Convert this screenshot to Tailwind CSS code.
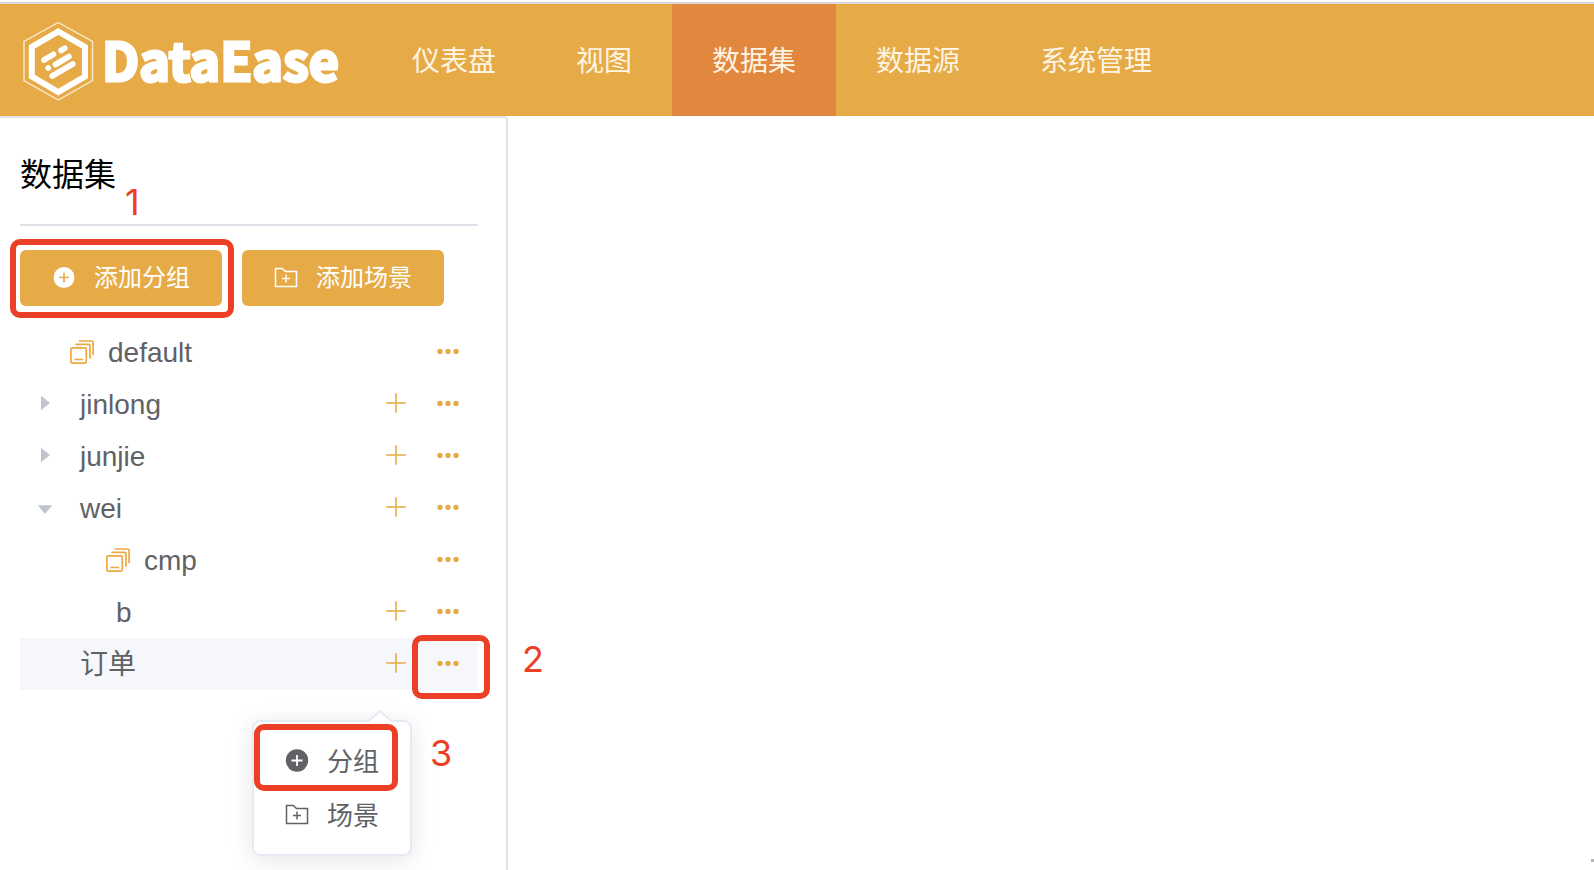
<!DOCTYPE html>
<html lang="zh-CN">
<head>
<meta charset="utf-8">
<meta name="viewport" content="width=device-width, initial-scale=1">
<title>DataEase</title>
<script src="https://cdn.jsdelivr.net/npm/@tailwindcss/browser@4"></script>
</head>
<body class="bg-white font-['Liberation_Sans','Noto_Sans_CJK_SC',sans-serif] text-[#606266]">
<svg class="hidden" aria-hidden="true">
  <symbol id="plus" viewBox="0 0 24 24"><path d="M12 2.200V21.800M2.200 12H21.800" fill="none" stroke="#e6ab46" stroke-width="1.600"/></symbol>
  <symbol id="dots" viewBox="0 0 24 24"><g fill="#e6ab46"><circle cx="4" cy="12.400" r="2.700"/><circle cx="12" cy="12.400" r="2.700"/><circle cx="20" cy="12.400" r="2.700"/></g></symbol>
  <symbol id="stack" viewBox="0 0 24 24"><g fill="none" stroke="#efa840" stroke-width="1.700" stroke-linecap="round" stroke-linejoin="round"><rect x=".9" y="7.800" width="15.400" height="15.300" rx="1.500"/><path d="M5 19.500H12.500M6 4.300H18.500Q20 4.300 20 5.800V18M9.500 1H21.600Q23.100 1 23.100 2.500V14.500"/></g></symbol>
  <symbol id="folder" viewBox="0 0 24 24"><path d="M1.500 2.500H8.300L11.500 5.500H22.500V20.500H1.500ZM12 8.500V16.500M8 12.500H16" fill="none" stroke="currentColor" stroke-width="1.500"/></symbol>
  <symbol id="right" viewBox="0 0 16 16"><path d="M4 .7L13 8L4 15.300Z" fill="#c0c4cc"/></symbol>
  <symbol id="down" viewBox="0 0 16 16"><path d="M.7 6.200H15.300L8 15Z" fill="#c0c4cc"/></symbol>
</svg>

<div class="relative flex min-h-screen flex-col overflow-hidden pt-0.5">
  <header class="flex h-[114px] items-stretch border-t-2 border-[#dadadd] bg-[#e6ab46]">
    <a href="#" class="flex w-[372px] shrink-0 items-center gap-2 pt-0.5 pl-[22px] text-white" aria-label="DataEase">
      <svg class="h-20 w-[72px]" viewBox="0 0 72 80" fill="none" aria-hidden="true">
        <path d="M36.300 1.500L70.500 20.500V59.500L36.300 79L2 59.500V20.500Z" stroke="#fff" stroke-opacity=".75" stroke-width="1.400"/>
        <path d="M36.300 10.500L63 26V55.500L36.300 71L9.800 55.500V26Z" stroke="#fff" stroke-width="6"/>
        <g stroke="#fff" stroke-width="5.600" stroke-linecap="round"><path d="M22 39L31.500 33.300M39 29.500L42.800 27.200M33.500 43.500L47 35.500M26.200 47L26.300 46.900M30.200 55L50.800 43"/></g>
      </svg>
      <span class="pb-1 font-['Noto_Sans_CJK_SC',sans-serif] text-[52px] leading-none font-bold [-webkit-text-stroke:3px_#fff]">DataEase</span>
    </a>
    <nav class="flex text-[28px] text-[#fdf4e4]">
      <a href="#" class="flex items-center px-10 pt-1">仪表盘</a>
      <a href="#" class="flex items-center px-10 pt-1">视图</a>
      <a href="#" aria-current="page" class="flex items-center bg-[#e2873e] px-10 pt-1">数据集</a>
      <a href="#" class="flex items-center px-10 pt-1">数据源</a>
      <a href="#" class="flex items-center px-10 pt-1">系统管理</a>
    </nav>
  </header>

  <div class="flex flex-1">
    <aside class="w-[508px] shrink-0 rounded-tr-sm border-t-2 border-r-2 border-[#e4e4e4] pr-7 pl-5">
      <div class="relative border-b-2 border-[#dcdfe6] pt-8 pb-6">
        <h1 class="text-[32px] leading-[50px] text-black">数据集</h1>
        <span class="absolute top-16 left-[105px] font-['Inter',sans-serif] text-4xl text-[#eb4025]">1</span>
      </div>

      <div class="mt-6 flex gap-5 text-2xl text-white">
        <div class="relative">
          <button type="button" class="flex h-14 items-center gap-[18px] rounded-md bg-[#e6ab46] px-8">
            <svg class="size-6" viewBox="0 0 24 24" aria-hidden="true"><circle cx="12" cy="11.500" r="10.500" fill="#fff"/><path d="M12 6.500V16.500M7 11.500H17" stroke="#e6ab46" stroke-width="1.600"/></svg>添加分组
          </button>
          <span class="pointer-events-none absolute -top-[11px] -right-3 -bottom-3 -left-2.5 rounded-[10px] border-6 border-[#eb4025]"></span>
        </div>
        <button type="button" class="flex h-14 items-center gap-[18px] rounded-md bg-[#e6ab46] px-8">
          <svg class="size-6" aria-hidden="true"><use href="#folder"/></svg>添加场景
        </button>
      </div>

      <ul class="mt-5 text-[28px] leading-[50px]">
        <li class="flex h-[52px] items-center pr-1 pl-[50px]">
          <svg class="mr-3.5 size-6" aria-hidden="true"><use href="#stack"/></svg>
          <span class="flex-1 pt-0.5">default</span>
          <button type="button" aria-label="更多" class="flex w-[52px] justify-center pb-0.5"><svg class="size-6"><use href="#dots"/></svg></button>
        </li>
        <li class="flex h-[52px] items-center pr-1 pl-2.5">
          <button type="button" aria-label="展开" class="mr-5 flex w-[30px] justify-center pb-0.5"><svg class="size-4"><use href="#right"/></svg></button>
          <span class="flex-1 pt-0.5">jinlong</span>
          <button type="button" aria-label="添加" class="flex w-[52px] justify-center pb-0.5"><svg class="size-6"><use href="#plus"/></svg></button>
          <button type="button" aria-label="更多" class="flex w-[52px] justify-center pb-0.5"><svg class="size-6"><use href="#dots"/></svg></button>
        </li>
        <li class="flex h-[52px] items-center pr-1 pl-2.5">
          <button type="button" aria-label="展开" class="mr-5 flex w-[30px] justify-center pb-0.5"><svg class="size-4"><use href="#right"/></svg></button>
          <span class="flex-1 pt-0.5">junjie</span>
          <button type="button" aria-label="添加" class="flex w-[52px] justify-center pb-0.5"><svg class="size-6"><use href="#plus"/></svg></button>
          <button type="button" aria-label="更多" class="flex w-[52px] justify-center pb-0.5"><svg class="size-6"><use href="#dots"/></svg></button>
        </li>
        <li>
          <div class="flex h-[52px] items-center pr-1 pl-2.5">
            <button type="button" aria-label="收起" class="mr-5 flex w-[30px] justify-center pb-0.5"><svg class="size-4"><use href="#down"/></svg></button>
            <span class="flex-1 pt-0.5">wei</span>
            <button type="button" aria-label="添加" class="flex w-[52px] justify-center pb-0.5"><svg class="size-6"><use href="#plus"/></svg></button>
            <button type="button" aria-label="更多" class="flex w-[52px] justify-center pb-0.5"><svg class="size-6"><use href="#dots"/></svg></button>
          </div>
          <ul>
            <li class="flex h-[52px] items-center pr-1 pl-[86px]">
              <svg class="mr-3.5 size-6" aria-hidden="true"><use href="#stack"/></svg>
              <span class="flex-1 pt-0.5">cmp</span>
              <button type="button" aria-label="更多" class="flex w-[52px] justify-center pb-0.5"><svg class="size-6"><use href="#dots"/></svg></button>
            </li>
            <li class="flex h-[52px] items-center pr-1 pl-24">
              <span class="flex-1 pt-0.5">b</span>
              <button type="button" aria-label="添加" class="flex w-[52px] justify-center pb-0.5"><svg class="size-6"><use href="#plus"/></svg></button>
              <button type="button" aria-label="更多" class="flex w-[52px] justify-center pb-0.5"><svg class="size-6"><use href="#dots"/></svg></button>
            </li>
          </ul>
        </li>
        <li class="relative flex h-[52px] items-center bg-[#f5f7fa] pr-1 pl-[60px]">
          <span class="flex-1 pt-0.5">订单</span>
          <button type="button" aria-label="添加" class="flex w-[52px] justify-center pb-0.5"><svg class="size-6"><use href="#plus"/></svg></button>
          <button type="button" aria-label="更多" class="flex w-[52px] justify-center pb-0.5"><svg class="size-6"><use href="#dots"/></svg></button>
          <span class="pointer-events-none absolute -top-[3px] -right-3 h-16 w-[78px] rounded-[10px] border-6 border-[#eb4025]"></span>
          <span class="absolute -top-1 left-[502px] font-['Inter',sans-serif] text-4xl leading-[50px] text-[#eb4025]">2</span>

          <div class="absolute top-[82px] left-[232px] w-40 rounded-lg border-2 border-[#e6eaf5] bg-white py-3 text-[26px] leading-[54px] shadow-[0_4px_24px_rgba(0,0,0,0.1)]">
            <svg class="absolute -top-3 left-[114px] h-3 w-6" viewBox="0 0 24 12" aria-hidden="true"><path d="M0 12L12 1L24 12Z" fill="#fff"/><path d="M1 11L12 1L23 11" fill="none" stroke="#e6eaf5" stroke-width="2"/></svg>
            <button type="button" class="flex h-[54px] w-full items-center gap-[18px] pl-[31px]">
              <svg class="size-6" viewBox="0 0 24 24" aria-hidden="true"><circle cx="12" cy="11.500" r="11.200" fill="#606266"/><path d="M12 6V17M6.500 11.500H17.500" stroke="#fff" stroke-width="1.800"/></svg><span class="pt-0.5">分组</span>
            </button>
            <button type="button" class="flex h-[54px] w-full items-center gap-[18px] pl-[31px]">
              <svg class="size-6" aria-hidden="true"><use href="#folder"/></svg><span class="pt-0.5">场景</span>
            </button>
            <span class="pointer-events-none absolute top-0.5 left-0 h-[67px] w-[144px] rounded-[10px] border-6 border-[#eb4025]"></span>
            <span class="absolute top-1 left-44 font-['Inter',sans-serif] text-4xl leading-[54px] text-[#eb4025]">3</span>
          </div>
        </li>
      </ul>
    </aside>
    <main class="flex-1"></main>
  </div>
  <span class="absolute right-0 bottom-2 h-[3px] w-[3px] bg-[#b4b4bc]" aria-hidden="true"></span>
</div>
</body>
</html>
